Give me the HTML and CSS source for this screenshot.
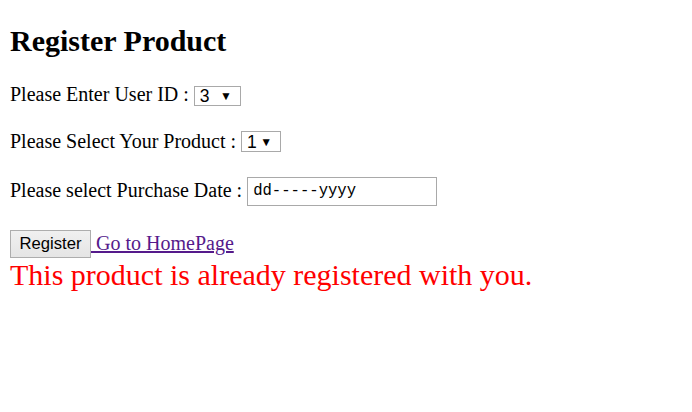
FILE: index.html
```html
<!DOCTYPE html>
<html>
<head>
<meta charset="utf-8">
<title>Register Product</title>
<link rel="stylesheet" href="styles.css">
</head>
<body>
<h2 class="title">Register Product</h2>
<form class="form">
  <div class="row row-user">
    <span class="label">Please Enter User ID :</span>
    <span class="select select-user"><span class="select-value">3</span><span class="select-arrow">▼</span></span>
  </div>
  <div class="row row-product">
    <span class="label">Please Select Your Product :</span>
    <span class="select select-product"><span class="select-value">1</span><span class="select-arrow">▼</span></span>
  </div>
  <div class="row row-date">
    <span class="label">Please select Purchase Date :</span>
    <span class="date-input">dd-----yyyy</span>
  </div>
  <div class="row row-actions">
    <button type="button" class="btn">Register</button><a class="home-link" href="#">&nbsp;Go to HomePage</a>
  </div>
</form>
<div class="message">This product is already registered with you.</div>
</body>
</html>
```

FILE: styles.css
```css
html, body {
  background: #ffffff;
}
body {
  margin: 0;
  padding: 0 10px;
  font-family: "Liberation Serif", "Times New Roman", serif;
  font-size: 20px;
  color: #000000;
}
.title {
  margin: 24px 0 0;
  font-size: 30px;
  line-height: 34px;
  font-weight: bold;
}
.form {
  display: flex;
  flex-direction: column;
}
.row {
  display: flex;
  align-items: flex-start;
  height: 23px;
  line-height: 23px;
  white-space: nowrap;
}
.row-user { margin-top: 25px; }
.row-product { margin-top: 24px; }
.row-date { margin-top: 26px; }
.row-actions { margin-top: 30px; }
.label {
  margin-right: 5px;
}
.select {
  box-sizing: border-box;
  display: flex;
  align-items: center;
  height: 20px;
  margin-top: 3px;
  border: 1px solid #a9a9a9;
  background: #ffffff;
  font-family: "Liberation Sans", Arial, sans-serif;
  font-size: 17.5px;
  line-height: 18px;
  padding: 0 8px 0 5px;
}
.select-user { width: 47px; }
.select-product { width: 40px; height: 21px; margin-top: 1px; }
.select-arrow {
  margin-left: auto;
  font-size: 12px;
}
.date-input {
  box-sizing: border-box;
  display: flex;
  align-items: center;
  width: 190px;
  height: 29px;
  margin-top: -2px;
  padding: 0 5px;
  border: 1px solid #a9a9a9;
  font-family: "Liberation Mono", "Courier New", monospace;
  font-size: 15.6px;
}
.btn {
  box-sizing: border-box;
  width: 81px;
  height: 28px;
  margin: -2px 0 0;
  padding: 0;
  border: 1px solid #adadad;
  border-radius: 0;
  background: linear-gradient(#f0f0f0, #e5e5e5);
  font-family: "Liberation Sans", Arial, sans-serif;
  font-size: 16.67px;
  color: #000000;
}
.home-link {
  color: #551a8b;
  text-decoration: underline;
}
.message {
  margin-top: 3px;
  color: #ff0000;
  font-size: 30px;
  line-height: 34px;
}
```
